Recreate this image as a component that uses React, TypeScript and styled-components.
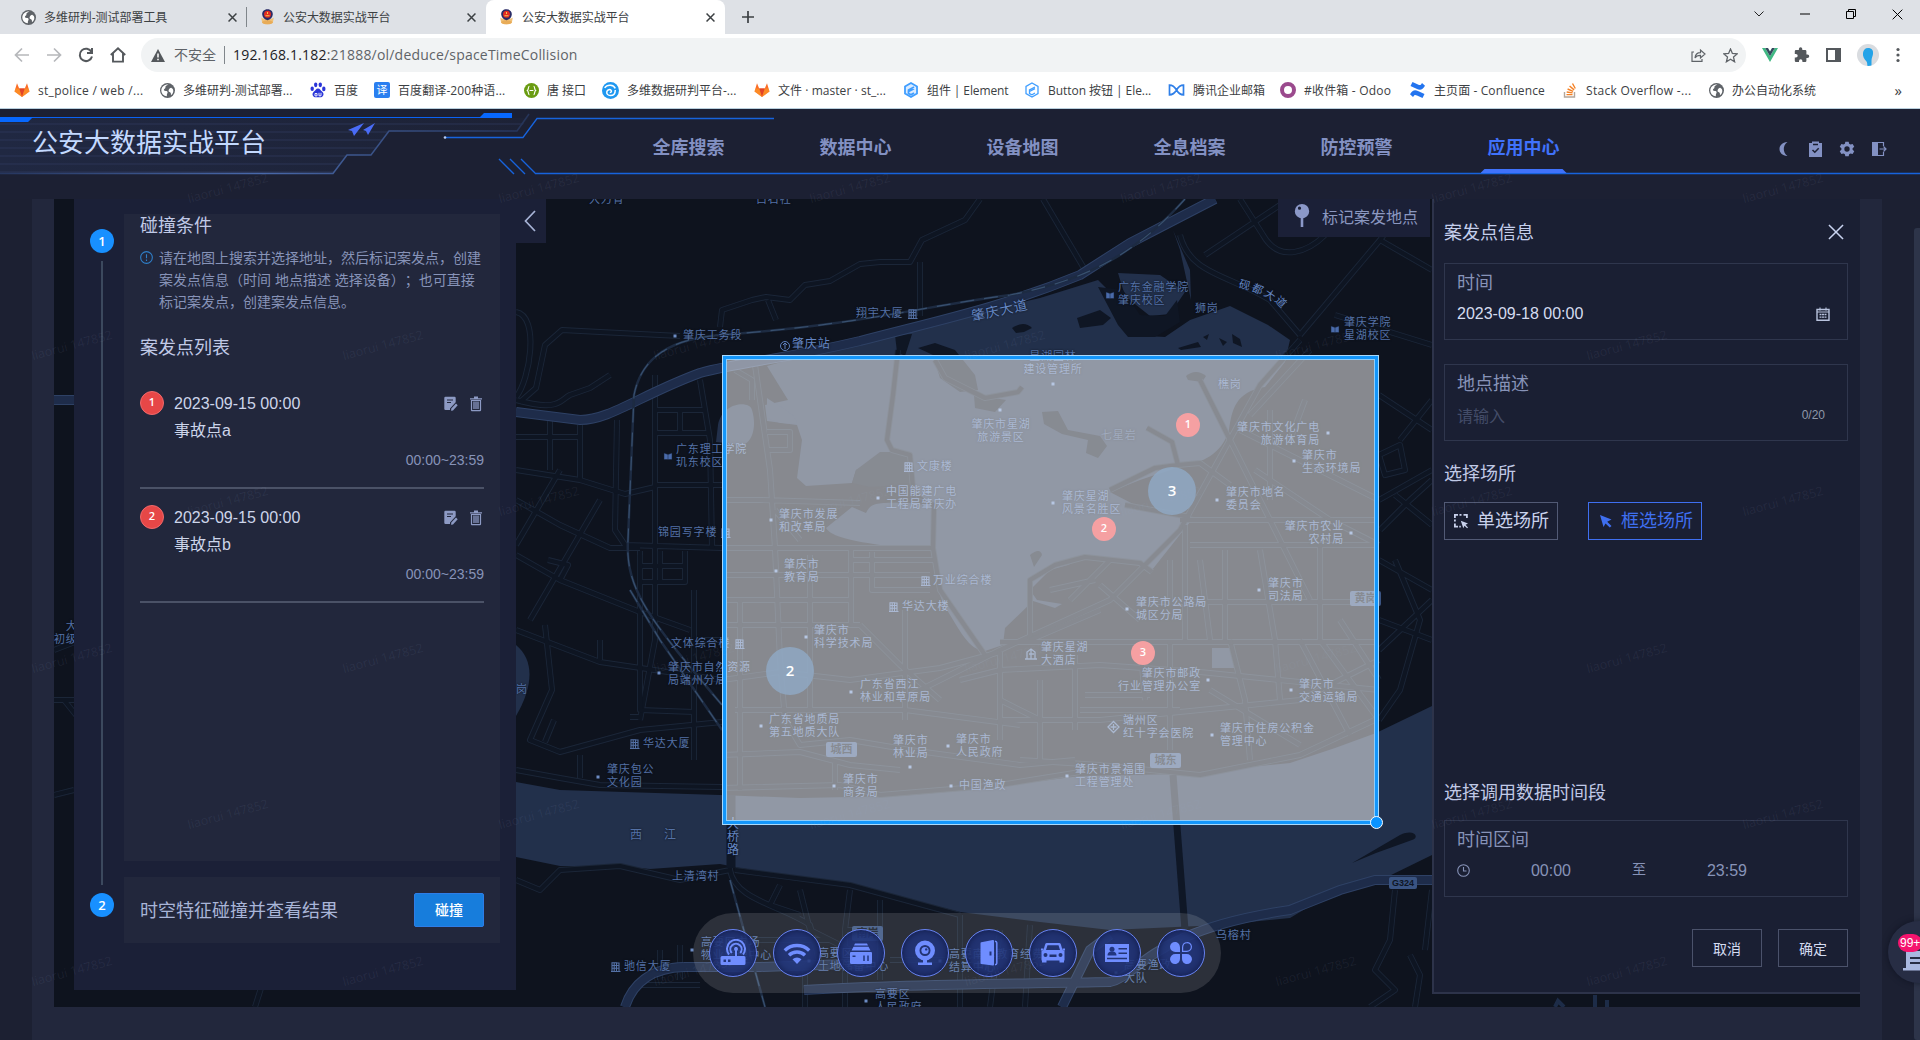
import React from "react";
import styled, { createGlobalStyle, css } from "styled-components";

const UI = `"Liberation Sans", "Noto Sans CJK SC", sans-serif`;
const SEGOE = `"Open Sans", "Noto Sans CJK SC", sans-serif`;

const Global = createGlobalStyle`
  *, *::before, *::after { box-sizing: border-box; }
  html, body { margin: 0; padding: 0; overflow: hidden; background: #1c2032; }
  body { font-family: ${UI}; text-spacing-trim: space-all; }
  svg { display: block; flex: none; }
  button { font: inherit; margin: 0; padding: 0; cursor: pointer; }
`;

const Window = styled.div`
  width: 1920px;
  height: 1040px;
  display: flex;
  flex-direction: column;
  overflow: hidden;
`;

/* ---------- browser chrome ---------- */

const TabStrip = styled.div`
  height: 34px;
  background: #dee1e6;
  display: flex;
  align-items: stretch;
  padding-left: 8px;
  font-size: 12px;
  font-family: ${SEGOE};
  color: #3c4043;
`;

const Tab = styled.div<{ $active?: boolean; $divider?: boolean }>`
  width: 239px;
  padding: 0 10px 0 13px;
  display: flex;
  align-items: center;
  gap: 8px;
  position: relative;
  letter-spacing: -0.05px;
  border-radius: 8px 8px 0 0;
  background: ${(p) => (p.$active ? "#fff" : "transparent")};
  ${(p) =>
    p.$divider &&
    css`
      &::after {
        content: "";
        position: absolute;
        right: 0;
        top: 7px;
        height: 20px;
        width: 1px;
        background: #80868b;
      }
    `}
`;

const TabTitle = styled.span`
  flex: 1;
  white-space: nowrap;
`;

const NewTab = styled.div`
  width: 46px;
  display: flex;
  align-items: center;
  justify-content: center;
`;

const WindowButtons = styled.div`
  margin-left: auto;
  display: flex;
  height: 28px;
  > div {
    width: 46px;
    display: flex;
    align-items: center;
    justify-content: center;
  }
`;

const Toolbar = styled.div`
  height: 40px;
  background: #fff;
  display: flex;
  align-items: center;
  padding-left: 14px;
  padding-top: 2px;
`;

const NavButtons = styled.div`
  display: flex;
  gap: 16px;
  width: 127px;
`;

const AddressBar = styled.div`
  width: 1605px;
  height: 34px;
  border-radius: 17px;
  background: #f1f3f4;
  display: flex;
  align-items: center;
  padding: 0 8px 0 10px;
  font-family: ${SEGOE};
  font-size: 14px;
  color: #5f6368;
`;

const Insecure = styled.span`
  margin-left: 9px;
  padding-right: 8px;
  line-height: 18px;
  border-right: 1px solid #80868b;
`;

const Url = styled.span`
  flex: 1;
  margin-left: 8px;
  padding-bottom: 1px;
  letter-spacing: 0.2px;
  b { font-weight: 400; color: #202124; }
`;

const BarIcons = styled.div<{ $gap: number; $ml?: number }>`
  display: flex;
  align-items: center;
  gap: ${(p) => p.$gap}px;
  margin-left: ${(p) => p.$ml ?? 0}px;
`;

const Avatar = styled.div`
  width: 22px;
  height: 22px;
  border-radius: 50%;
  background: #d9dce0;
  overflow: hidden;
`;

const Bookmarks = styled.div`
  height: 35px;
  background: #fff;
  border-bottom: 1px solid #b9cfdd;
  display: flex;
  align-items: center;
  padding: 0 18px 2px 14px;
  font-family: ${SEGOE};
  font-size: 12px;
  color: #3c4043;
`;

const Bookmark = styled.div<{ $w: number; $ls?: number }>`
  width: ${(p) => p.$w}px;
  display: flex;
  align-items: center;
  gap: 8px;
  white-space: nowrap;
  letter-spacing: ${(p) => p.$ls ?? 0}px;
`;

const More = styled.span`
  margin-left: auto;
  font-size: 15px;
`;

const Translate = styled.div`
  width: 16px;
  height: 16px;
  border-radius: 2px;
  background: #2a7ff0;
  color: #fff;
  font-size: 11px;
  line-height: 16px;
  text-align: center;
`;

const Ring = styled.div`
  width: 16px;
  height: 16px;
  border-radius: 50%;
  border: 4px solid #9b4a8d;
`;

/* ---------- platform header ---------- */

const Platform = styled.div`
  height: 931px;
  position: relative;
  display: flex;
  flex-direction: column;
  background: #1c2032;
`;

const Header = styled.header`
  height: 90px;
  position: relative;
  display: flex;
  align-items: flex-start;
  background: #1c2033;
`;

const HeaderArt = styled.svg`
  position: absolute;
  left: 0;
  top: 0;
`;

const Brand = styled.h1`
  margin: 15px 0 0 32px;
  width: 573px;
  font-size: 26px;
  line-height: 38px;
  font-weight: 400;
  color: #c3d9ff;
  position: relative;
`;

const Nav = styled.nav`
  display: flex;
  position: relative;
`;

const NavItem = styled.a<{ $on?: boolean }>`
  width: 167px;
  padding-top: 25px;
  line-height: 28px;
  text-align: center;
  font-size: 18px;
  font-weight: 700;
  color: ${(p) => (p.$on ? "#4072fb" : "#8391c3")};
  height: 65px;
  display: flex;
  flex-direction: column;
  align-items: center;
  gap: 7px;
  &::after {
    content: "";
    flex: none;
    width: 86px;
    height: 4px;
    clip-path: polygon(4px 0, 82px 0, 100% 100%, 0 100%);
    background: ${(p) => (p.$on ? "#4072fb" : "transparent")};
  }
`;

const HeaderTools = styled.div`
  margin: 32px 33px 0 auto;
  display: flex;
  gap: 16px;
  position: relative;
`;

/* ---------- page ---------- */

const Page = styled.main`
  height: 841px;
  margin: 0 38px 0 32px;
  padding: 0 22px;
  background: #22273c;
`;

const MapArea = styled.section`
  height: 808px;
  position: relative;
  overflow: hidden;
  background: #0e131e;
`;

const MapDrawing = styled.svg`
  position: absolute;
  left: 0;
  top: 0;
`;

const MapLabel = styled.div<{ $x: number; $y: number; $align?: string; $c?: string; $size?: number; $rot?: number }>`
  position: absolute;
  left: ${(p) => p.$x - 54}px;
  top: ${(p) => p.$y - 206}px;
  ${(p) => p.$align === "right" && "transform: translateX(-100%);"}
  ${(p) => p.$align === "center" && "transform: translateX(-50%);"}
  ${(p) => p.$rot !== undefined && `transform: rotate(${p.$rot}deg);`}
  text-align: ${(p) => p.$align ?? "left"};
  font-size: ${(p) => p.$size ?? 11}px;
  letter-spacing: 0.85px;
  line-height: 13px;
  color: ${(p) => p.$c ?? "#5471a6"};
  white-space: pre;
  text-shadow: 0 0 2px #0b101a;
`;

const DistrictTag = styled.div<{ $x: number; $y: number; $w: number }>`
  position: absolute;
  left: ${(p) => p.$x - 54}px;
  top: ${(p) => p.$y - 199}px;
  width: ${(p) => p.$w}px;
  height: ${(p) => (p.$w < 30 ? 12 : 15)}px;
  border-radius: 2px;
  background: #3a5482;
  color: #0e1625;
  font-size: ${(p) => (p.$w < 30 ? 9 : 11)}px;
  line-height: ${(p) => (p.$w < 30 ? 12 : 15)}px;
  font-weight: 700;
  text-align: center;
`;

const ClusterDot = styled.div<{ $x: number; $y: number; $big?: boolean }>`
  position: absolute;
  width: ${(p) => (p.$big ? 48 : 24)}px;
  height: ${(p) => (p.$big ? 48 : 24)}px;
  left: ${(p) => p.$x - 54 - (p.$big ? 24 : 12)}px;
  top: ${(p) => p.$y - 199 - (p.$big ? 24 : 12)}px;
  border-radius: 50%;
  background: ${(p) => (p.$big ? "rgba(143,168,194,0.86)" : "#f5a0a2")};
  color: #fff;
  font-family: ${SEGOE};
  font-size: ${(p) => (p.$big ? 15 : 11)}px;
  font-weight: 600;
  line-height: ${(p) => (p.$big ? 46 : 21)}px;
  text-align: center;
`;

const Selection = styled.div`
  position: absolute;
  left: 668px;
  top: 156px;
  width: 657px;
  height: 470px;
  border: 1px solid #a9d9fb;
  background: rgba(255, 255, 255, 0.5);
  background-clip: padding-box;
  box-shadow: inset 0 0 0 3px #1496fa, inset 0 0 0 4px #8fcdfa;
`;

const Handle = styled.div`
  position: absolute;
  right: -5px;
  bottom: -5px;
  width: 13px;
  height: 13px;
  border-radius: 50%;
  background: #0a93ff;
  border: 1px solid #fff;
`;

const Overlay = styled.div`
  position: relative;
  height: 100%;
  display: flex;
  align-items: flex-start;
  padding-left: 20px;
`;

const SidePanel = styled.aside`
  width: 442px;
  height: 791px;
  background: #1b2037;
  display: flex;
  padding: 15px 16px 0 16px;
`;

const Steps = styled.div`
  width: 24px;
  margin-right: 10px;
  padding-top: 15px;
  display: flex;
  flex-direction: column;
  align-items: center;
`;

const StepNo = styled.div`
  width: 24px;
  height: 24px;
  flex: none;
  border-radius: 50%;
  background: #1890ff;
  color: #fff;
  font-family: ${SEGOE};
  font-size: 13px;
  font-weight: 600;
  line-height: 24px;
  text-align: center;
`;

const StepLine = styled.div`
  width: 2px;
  height: 624px;
  margin: 8px 0;
  background: #3c495e;
`;

const Cards = styled.div`
  width: 376px;
  display: flex;
  flex-direction: column;
  gap: 16px;
`;

const Conditions = styled.div`
  height: 647px;
  padding: 0 16px;
  background: #22273c;
`;

const Heading = styled.h2<{ $mt?: number }>`
  margin: ${(p) => p.$mt ?? 0}px 0 0;
  font-size: 18px;
  line-height: 24px;
  font-weight: 400;
  color: #c0c9e6;
`;

const Tip = styled.div`
  display: flex;
  gap: 6px;
  margin-top: 9px;
  font-size: 14px;
  line-height: 22px;
  color: #8793b8;
  white-space: nowrap;
  svg { margin-top: 4px; }
`;

const IncidentList = styled.div`
  padding-top: 15px;
`;

const Incident = styled.div`
  height: 114px;
  border-bottom: 2px solid #4b5267;
  padding-top: 16px;
  display: grid;
  grid-template-columns: 34px 1fr auto;
  grid-template-rows: 27px 27px 30px;
  color: #cdd5ea;
  font-size: 16px;
  line-height: 26px;
`;

const IncidentNo = styled.div`
  width: 24px;
  height: 24px;
  border-radius: 50%;
  background: #e64747;
  border: 1px solid #f0696b;
  color: #fff;
  font-family: ${SEGOE};
  font-size: 11px;
  font-weight: 600;
  line-height: 20px;
  text-align: center;
`;

const IncidentName = styled.div`
  grid-column: 2 / 4;
`;

const IncidentHours = styled.div`
  grid-column: 1 / 4;
  text-align: right;
  font-size: 14px;
  line-height: 31px;
  color: #8793b8;
`;

const Actions = styled.div`
  display: flex;
  gap: 12px;
  padding: 5px 2px 0 0;
  color: #8d9ac4;
`;

const RunCard = styled.div`
  height: 66px;
  padding: 0 16px;
  background: #22273c;
  display: flex;
  align-items: center;
  justify-content: space-between;
  font-size: 18px;
  color: #a9b5d8;
  span { padding-bottom: 2px; }
`;

const RunButton = styled.button`
  width: 70px;
  height: 34px;
  border: 1px solid #2e7de6;
  border-radius: 2px;
  background: #177ddc;
  color: #fff;
  font-size: 14px;
  line-height: 30px;
  font-weight: 500;
`;

const Collapse = styled.div`
  width: 30px;
  height: 44px;
  background: #1b2037;
  display: flex;
  align-items: center;
  justify-content: center;
  padding: 0 3px 1px 0;
`;

const MarkButton = styled.div`
  width: 152px;
  height: 38px;
  margin: 0 2px 0 auto;
  background: #1b2037;
  color: #8b98c0;
  display: flex;
  align-items: center;
  gap: 12px;
  padding: 0 0 5px 16px;
  font-size: 16px;
`;

const InfoPanel = styled.aside`
  width: 428px;
  height: 795px;
  background: #1a1f33;
  border-left: 2px solid #2d334a;
  border-bottom: 2px solid #2d334a;
  padding: 0 12px 0 10px;
  display: flex;
  flex-direction: column;
`;

const PanelHead = styled.div`
  height: 64px;
  flex: none;
  display: flex;
  align-items: center;
  justify-content: space-between;
  padding: 0 4px 0 0;
  font-size: 18px;
  color: #c5cfec;
  svg { margin-top: 2px; }
`;

const Field = styled.div<{ $mt?: number }>`
  height: 77px;
  flex: none;
  margin-top: ${(p) => p.$mt ?? 0}px;
  border: 1px solid #2f364d;
  padding: 6px 12px 0;
  font-size: 16px;
  color: #d5dcef;
`;

const FieldName = styled.div`
  font-size: 18px;
  line-height: 27px;
  color: #8793b8;
`;

const FieldRow = styled.div<{ $pr?: number }>`
  height: 33px;
  display: flex;
  align-items: center;
  padding-right: ${(p) => p.$pr ?? 0}px;
`;

const Value = styled.span`
  flex: 1;
`;

const Placeholder = styled.span`
  flex: 1;
  color: #434c68;
`;

const Count = styled.span`
  font-size: 12px;
  color: #8f97a8;
`;

const TimeValue = styled.span`
  width: 162px;
  text-align: center;
  color: #8793b8;
`;

const Until = styled.span`
  width: 14px;
  font-size: 14px;
  color: #8793b8;
  padding-bottom: 6px;
`;

const Places = styled.div`
  display: flex;
  gap: 30px;
  margin-top: 16px;
`;

const PlaceButton = styled.button<{ $on?: boolean }>`
  width: 114px;
  height: 38px;
  background: transparent;
  border: 1px solid ${(p) => (p.$on ? "#3f6ff0" : "#525a75")};
  color: ${(p) => (p.$on ? "#3f6ff0" : "#c9d2ec")};
  display: flex;
  align-items: center;
  gap: 8px;
  padding: 0 8px;
  font-size: 18px;
  line-height: 34px;
  white-space: nowrap;
`;

const Footer = styled.div`
  display: flex;
  justify-content: flex-end;
  gap: 16px;
  margin-top: 32px;
`;

const PlainButton = styled.button`
  width: 70px;
  height: 38px;
  background: transparent;
  border: 1px solid #4b526b;
  color: #d5dcf2;
  font-size: 14px;
`;

const Dock = styled.div`
  position: absolute;
  left: 639px;
  top: 714px;
  width: 528px;
  height: 80px;
  border-radius: 40px;
  background: rgba(255, 255, 255, 0.125);
  display: flex;
  align-items: center;
  gap: 16px;
  padding-left: 16px;
`;

const DockButton = styled.div`
  width: 48px;
  height: 48px;
  border-radius: 50%;
  border: 1.5px solid #6681ee;
  background: rgba(33, 52, 124, 0.86);
  box-shadow: inset 0 0 7px rgba(14, 23, 66, 0.9);
  color: #6f8dff;
  display: flex;
  align-items: center;
  justify-content: center;
`;

const Scrollbar = styled.div`
  position: absolute;
  right: 0;
  top: 119px;
  bottom: 0;
  width: 6px;
  border-radius: 3px 0 0 3px;
  background: #2d3449;
`;

const FloatBall = styled.div`
  position: absolute;
  left: 1888px;
  top: 812px;
  width: 62px;
  height: 62px;
  border-radius: 50%;
  background: #272d44;
  box-shadow: 0 0 6px rgba(10, 14, 26, 0.6);
`;

const Badge = styled.span`
  position: absolute;
  left: 10px;
  top: 13px;
  height: 18px;
  padding: 0 2px;
  border-radius: 9px;
  background: #f5146e;
  color: #fff;
  font-size: 12px;
  line-height: 18px;
`;

const Watermark = styled.span<{ $x: number; $y: number }>`
  position: absolute;
  left: ${(p) => p.$x}px;
  top: ${(p) => p.$y}px;
  transform-origin: 0 100%;
  transform: rotate(-15deg);
  font-family: ${SEGOE};
  font-size: 12.5px;
  line-height: 16px;
  color: rgba(160, 172, 205, 0.09);
  pointer-events: none;
  white-space: nowrap;
`;

/* ---------- icons ---------- */

const Globe = () => (
  <svg width="15" height="15" viewBox="0 0 16 16">
    <circle cx="8" cy="8" r="8" fill="#5f6368" />
    <path d="M9 1.600c-1 1-3.400 1-3.200 3.200.2 1.200-2.200 1.400-1.600 3 .8 1.200 3 .2 3.800 1.600.6 1.400-1 1.800-.6 4.800-3.600-.2-6-3-6-6.400C1.600 4.400 4.400 1.400 9 1.600z" fill="#fff" />
    <path d="M12.200 5.200c1.200.4 2 1.600 2 3.200 0 1.800-1.200 3.800-2.400 4.400-.4-1 .2-2-.8-2.800-1-.6-2.200-.8-1.800-2.400.4-1.400 1.800-2.600 3-2.400z" fill="#fff" />
  </svg>
);

const Police = () => (
  <svg width="15" height="16" viewBox="0 0 15 16">
    <path d="M1.200 8.500C3 10.500 12 10.500 13.800 8.500L13 13c-1 3-10 3-11 0z" fill="#f0c078" />
    <ellipse cx="7.500" cy="13.300" rx="5.500" ry="2" fill="#e8ac58" />
    <path d="M7.500.3C11 .3 13 2.600 12.800 5.600c-.2 3-2.400 5.200-5.300 5.600C4.600 10.800 2.400 8.600 2.200 5.600 2 2.600 4 .3 7.500.3z" fill="#2b2c66" />
    <circle cx="7.500" cy="5.300" r="3.500" fill="#e32d22" />
    <path d="M5.500 6.300h4v1h-4zM7 3h1v2H7z" fill="#f7c64a" />
  </svg>
);

const Close = ({ s = 9, c = "#3c4043", w = 1.5 }: { s?: number; c?: string; w?: number }) => (
  <svg width={s} height={s} viewBox="0 0 10 10" stroke={c} strokeWidth={w * (10 / s)} fill="none">
    <path d="M.6.600 9.400 9.400M9.400.600.6 9.400" />
  </svg>
);

const Gitlab = () => (
  <svg width="16" height="16" viewBox="0 0 16 16">
    <path d="M8 15 .5 9.400 3 1.200 5.200 6.400h5.600L13 1.200l2.500 8.200z" fill="#fc6d26" />
    <path d="M8 15 5.200 6.400h5.600z" fill="#e24329" />
    <path d="M.5 9.400 1.500 6.400h3.700L8 15zM15.500 9.400l-1-3h-3.700L8 15z" fill="#fca326" opacity=".55" />
  </svg>
);

const Baidu = () => (
  <svg width="16" height="16" viewBox="0 0 16 16" fill="#2a35d8">
    <ellipse cx="5.700" cy="2.800" rx="1.700" ry="2.400" />
    <ellipse cx="10.300" cy="2.800" rx="1.700" ry="2.400" />
    <ellipse cx="2.200" cy="6.700" rx="1.700" ry="2.300" />
    <ellipse cx="13.800" cy="6.900" rx="1.700" ry="2.300" />
    <path d="M8 6.400c2 0 2.700 2 4 3.200 1.600 1.400 1.800 2.600 1.200 4-.8 2-3 1.800-5.200 1.600-2.200.2-4.400.4-5.200-1.600-.6-1.400-.2-2.800 1.200-4C5.300 8.400 6 6.400 8 6.400z" />
    <path d="M5 11.500h2v2.400H5zM9 10.800v3h2v-3" fill="none" stroke="#fff" strokeWidth=".9" />
  </svg>
);

const GreenApi = () => (
  <svg width="15" height="15" viewBox="0 0 16 16">
    <circle cx="8" cy="8" r="8" fill="#6a9c12" />
    <path d="M5.800 3.500c-1.600 0-.6 3.500-2.200 4.500 1.600 1 .6 4.500 2.200 4.500M10.200 3.500c1.600 0 .6 3.500 2.200 4.500-1.600 1-.6 4.500-2.200 4.500M6 8h4" stroke="#fff" strokeWidth="1.200" fill="none" />
  </svg>
);

const BlueSwirl = () => (
  <svg width="17" height="17" viewBox="0 0 16 16">
    <circle cx="8" cy="8" r="8" fill="#1f98f0" />
    <path d="M2.500 5.500C5 1.800 11 2.500 12.500 6M12.500 7.500c0 3.500-2 5.300-4.500 5.300S4 11 4.600 9s2.900-2.300 3.900-1.200 0 2.200-1.200 2.200" stroke="#fff" strokeWidth="1.400" fill="none" />
  </svg>
);

const ElementHex = ({ solid }: { solid?: boolean }) => (
  <svg width="16" height="16" viewBox="0 0 16 16" fill="none" stroke="#409eff" strokeWidth={solid ? 1.8 : 1.3}>
    <path d="M8 1 14 4.400v7.200L8 15l-6-3.400V4.400z" fill={solid ? "#dcecff" : "none"} />
    <path d="M11 5 5.500 8v3.500L8 12.800l3-1.800M5.500 9.500 11 6.600" />
  </svg>
);

const Tencent = () => (
  <svg width="17" height="12" viewBox="0 0 17 12" fill="none" stroke="#2f7fe8" strokeWidth="1.700">
    <path d="M1.500 1.200C5 1.200 7 3.500 8.500 6S12 10.800 15.500 10.800V1.200C12 1.200 10 3.500 8.500 6S5 10.800 1.500 10.800z" />
  </svg>
);

const Confluence = () => (
  <svg width="17" height="16" viewBox="0 0 17 16" fill="#2374ef">
    <path d="M1 12.200C3.500 7.800 6 7.500 9.500 9.200l6 2.800-2 4-5.500-2.600c-2-.9-2.600-.8-4 1.600z" />
    <path d="M16 3.800C13.500 8.200 11 8.500 7.500 6.800L1.500 4l2-4L9 2.600c2 .9 2.600.8 4-1.600z" />
  </svg>
);

const StackO = () => (
  <svg width="15" height="16" viewBox="0 0 15 16" fill="none" strokeWidth="1.400">
    <path d="M1.500 10v5h10v-5" stroke="#b3a69b" />
    <path d="M3.500 12.600h6M3.700 10l5.900.9M4.600 7l5.500 2.400M6.600 4l4.500 3.900M9.500 1.500l2.800 5" stroke="#f48024" />
  </svg>
);

const CalendarIcon = () => (
  <svg width="14" height="14" viewBox="0 0 14 14" fill="none" stroke="#b9c3de">
    <path d="M1 2.500h12v10.800H1z" strokeWidth="1.400" />
    <path d="M1 5h12M4 .5v3M10 .5v3" strokeWidth="1.100" />
    <path d="M3.500 7.500h2M6 7.500h2M8.500 7.500h2M3.500 10.200h2M6 10.200h2M8.500 10.200h2" strokeWidth="1.300" />
  </svg>
);

const ClockIcon = () => (
  <svg width="13" height="13" viewBox="0 0 13 13" fill="none" stroke="#8793b8" strokeWidth="1.100">
    <circle cx="6.500" cy="6.500" r="5.800" />
    <path d="M6.500 3v4h3" />
  </svg>
);

const BoxSelectIcon = () => (
  <svg width="16" height="16" viewBox="0 0 16 16" fill="currentColor">
    <path d="M1 1h4v1.800H2.800V5H1zM6.500 1h2v1.800h-2zM10.500 1h4.300v4H13V2.800h-2.500zM1 6.500h1.800v2H1zM1 10.500h1.800v2.300H5v1.800H1zM6.300 12.800h1.500v1.800H6.300z" />
    <path d="M7.800 7.800l7.200 2.700-2.500 1.300 2.500 2.600-.9.900-2.600-2.500-1.200 2.400z" />
  </svg>
);

const CursorIcon = () => (
  <svg width="16" height="16" viewBox="0 0 16 16" fill="currentColor">
    <path d="M3 2l11.500 4.500-4.300 2.200 4.300 4.200-1.700 1.700-4.300-4.200L6.500 14z" />
  </svg>
);

const Building = ({ x, y }: { x: number; y: number }) => (
  <g transform={`translate(${x - 4} ${y - 5})`} fill="none" stroke="#5471a6" strokeWidth="1.100">
    <path d="M1 9.500V.8h4.500v8.700M5.500 1H8v8.500M0 9.500h9.500M3.200 1v8M1 3.500H8M1 6.200h7" />
  </g>
);

const Book = ({ x, y }: { x: number; y: number }) => (
  <path d={`M${x - 4} ${y - 3}l4 1.500 4-1.500v6.500h-8zM${x} ${y - 1}v4`} fill="#4a6bab" stroke="#142036" strokeWidth=".5" />
);

/* ---------- map data ---------- */

type Lab = [number, number, string, ("left" | "right" | "center")?, string?, number?, number?];

const LABELS: Lab[] = [
  [589, 200, "大力青"], [756, 200, "白石社"], [683, 336, "肇庆工务段"], [792, 345, "肇庆站", "left", "#6587c4", 12],
  [856, 314, "翔宇大厦"], [676, 450, "广东理工学院\n玑东校区"], [658, 533, "锦园写字楼"], [779, 515, "肇庆市发展\n和改革局"],
  [784, 565, "肇庆市\n教育局"], [886, 492, "中国能建广电\n工程局肇庆办"], [917, 467, "文康楼"], [933, 581, "万业综合楼"],
  [902, 607, "华达大楼"], [971, 311, "肇庆大道", "left", "#6587c4", 13.500, -12], [1118, 288, "广东金融学院\n肇庆校区"],
  [1195, 309, "狮岗"], [1239, 286, "砚", "left", "#6587c4", 11, 15], [1252, 290, "都", "left", "#6587c4", 11, 25],
  [1264, 296, "大", "left", "#6587c4", 11, 35], [1275, 303, "道", "left", "#6587c4", 11, 45],
  [1344, 323, "肇庆学院\n星湖校区"], [1053, 357, "星湖园林\n建设管理所", "center"], [1218, 385, "樵岗"],
  [1001, 425, "肇庆市星湖\n旅游景区", "center"], [1101, 436, "七星岩", "left", "#41577f"], [1320, 428, "肇庆市文化广电\n旅游体育局", "right"],
  [1302, 456, "肇庆市\n生态环境局"], [1226, 493, "肇庆市地名\n委员会"], [1062, 497, "肇庆星湖\n风景名胜区"],
  [1344, 527, "肇庆市农业\n农村局", "right"], [1268, 584, "肇庆市\n司法局"], [1136, 603, "肇庆市公路局\n城区分局"],
  [1041, 648, "肇庆星湖\n大酒店"], [1201, 674, "肇庆市邮政\n行业管理办公室", "right"], [1299, 685, "肇庆市\n交通运输局"],
  [1123, 721, "端州区\n红十字会医院"], [1220, 729, "肇庆市住房公积金\n管理中心"], [1075, 770, "肇庆市景福围\n工程管理处"],
  [956, 740, "肇庆市\n人民政府"], [959, 786, "中国渔政"], [1216, 936, "乌榕村"], [1124, 966, "高要渔政\n大队"],
  [949, 955, "高要南岸教育经费\n结算中心"], [671, 644, "文体综合楼"], [668, 668, "肇庆市自然资源\n局端州分局"],
  [814, 631, "肇庆市\n科学技术局"], [860, 685, "广东省西江\n林业和草原局"], [769, 720, "广东省地质局\n第五地质大队"],
  [893, 741, "肇庆市\n林业局"], [843, 780, "肇庆市\n商务局"], [643, 744, "华达大厦"], [607, 770, "肇庆包公\n文化园"],
  [630, 836, "西", "left", "#5471a6", 12], [664, 836, "江", "left", "#5471a6", 12], [727, 825, "大\n桥\n路", "left", "#6587c4", 12],
  [672, 877, "上清湾村"], [516, 690, "岗"], [624, 967, "驰信大厦"], [701, 943, "高要区市场\n物业管理中心"],
  [818, 954, "高要区\n土地储备中心"], [875, 995, "高要区\n人民政府"], [54, 627, "   大\n初级"],
];

const DOTS: [number, number][] = [
  [675, 336], [771, 520], [776, 571], [878, 498], [1053, 384], [1000, 410], [1328, 433], [1294, 461], [1217, 500], [1053, 503],
  [1351, 533], [1259, 590], [1127, 609], [1208, 680], [1291, 690], [1212, 735], [1067, 776], [948, 746], [951, 786], [1116, 973],
  [659, 673], [806, 637], [851, 692], [761, 726], [910, 767], [834, 786], [598, 777], [692, 950], [809, 961], [866, 1001], [940, 961],
];

const BUILDINGS: [number, number][] = [[912, 314], [908, 467], [925, 581], [893, 607], [725, 533], [739, 644], [634, 744], [615, 967]];

const TAGS: [number, number, number, string][] = [
  [1350, 591, 31, "黄岗"], [1150, 753, 31, "城东"], [826, 742, 31, "城西"], [852, 926, 31, "南岸"], [1389, 877, 28, "G324"],
];

const WATER = [
  "M767 366L860 340 960 316 1040 298 1098 280 1118 300 1128 335 1165 337 1190 320 1230 306 1268 325 1290 340 1285 362 1265 387C1235 392 1232 410 1229 430C1222 455 1200 463 1185 465L1140 480 1110 492 1135 505 1165 514 1194 517 1152 570 1130 563 1084 557 1068 565 1050 570 1030 590 1037 600 1062 604 1055 608 1033 601 1005 628 1003 645 985 651C968 650 960 630 945 607C932 580 934 560 934 546L880 545C845 540 830 535 826 528L852 507 866 513C872 500 880 503 930 503L913 490 912 458 895 452 856 470 852 483 806 486 797 478 802 440 797 425 767 421 765 405 788 400z",
  "M767 398C785 410 797 415 797 424L780 423 767 418z",
  "M718 425C722 402 750 400 752 410C758 430 750 446 740 445L716 442z",
  "M516 645C534 660 534 685 516 716z",
  "M516 782L560 790 720 795 800 798 900 796 980 789 1080 776 1180 774 1290 763 1335 748 1376 733 1432 706V855L1385 878 1340 888 1290 918 1220 925 1110 930 1040 922 960 912 880 892 800 877 740 868 720 864 650 869 620 866 560 866 516 857z",
  "M1173 230L1190 270 1191 300 1180 250z",
  "M1212 648h22v20h-22z",
  "M1118 273L1160 275 1185 292 1170 314 1150 316 1125 296z",
];

const LAND = [
  "M918 348L935 343 955 350 975 375 978 390 960 392 940 378 933 355z",
  "M974 395L1006 400 995 412 975 408z",
  "M1042 412L1058 411 1068 430 1100 436 1107 446 1098 458 1086 453 1088 440 1062 434 1044 424z",
  "M1077 318L1100 310 1111 318 1103 325 1080 328z",
  "M1012 328q12-8 20 0l-8 4-8 1z",
  "M1178 348l20-6 3 5-20 3zM1203 337l6-3-2 6zM1219 338l8 4-4 4zM1232 334l8 5 2 8-9-4z",
  "M1098 287L1118 325 1128 337 1155 337 1180 322 1177 300 1165 316 1140 315 1123 290z",
  "M1186 376q10-8 20 0l-4 6-14-2z",
  "M856 470L880 452 895 452 912 460 912 485 870 487 852 483z",
  "M1030 555q10-8 12 0l-8 12z",
  "M1352 863L1400 835C1415 828 1420 838 1412 840L1376 853z",
  "M895 335L912 334 905 356 897 352z",
];

const MAIN_ROADS = [
  "M54 400H120M516 412L580 420C610 420 640 395 700 373C740 362 780 360 860 341C940 320 1000 308 1080 275L1130 243 1215 199",
  "M684 967H760L820 965 870 963",
  "M625 1007C632 985 650 968 684 967M804 990C900 984 1000 984 1110 982C1140 975 1150 930 1290 910L1340 890 1375 880 1432 880",
  "M1062 1007L1090 950 1110 935",
];

const ROADS = [
  "M516 312C540 316 530 380 516 397M520 402L536 388 545 345 562 330 600 332 680 336",
  "M720 327L722 310 752 300 766 297 790 300 805 285 830 281 860 264 880 262 910 262 922 240 965 220 980 199M768 300L776 320",
  "M516 400C560 412 560 400 570 395L590 388 610 375",
  "M920 262L920 316M1043 199L1085 270",
  "M1180 235C1190 275 1230 275 1270 300L1300 335",
  "M1300 335L1380 240 1432 170M1240 199L1263 235C1280 265 1310 250 1325 235M1205 255L1280 205",
  "M1380 240L1432 270M1335 315L1432 345M1300 340L1260 385 1180 530 1110 600 1000 650 900 700",
  "M655 375V530L655 640 640 720M550 420V470M580 425V480M617 420L615 530 625 545 722 548",
  "M700 380L710 440 712 548M655 410H705M680 410V433M655 433H710M655 485H722M516 437H580M516 470L580 480 625 494 655 487",
  "M516 500L560 525 610 548H640M516 555L560 580 640 612 690 630M548 560L568 565 560 580M516 630L600 662 722 680",
  "M530 620L600 500M516 545L560 470M640 551V582H685V551M660 551V582M640 566H685",
  "M722 640H700M640 555V710L694 712M545 625L552 690 530 740 560 752 640 730 722 722M694 590V760M630 717H640",
  "M516 770L560 778 600 785 722 787M600 640V660M554 720L545 742M580 755V778",
  "M755 365L770 470 775 548M735 370L752 380V400M767 432H790V450H767M722 500H760L860 503M775 510L800 540",
  "M722 548H830L934 548M722 575H930M775 548L780 660 785 720M810 555V710M851 548V625 M722 600H850M722 625H860M851 560H934",
  "M872 552V590H930M905 610V720M860 625L900 665 940 700M722 680L780 672 850 680 940 668 1000 652",
  "M740 600V790M735 710H905L1020 725M785 720L800 745 850 740 910 750 1020 765 1075 760",
  "M722 755L800 752 850 765 900 770M835 760V790M722 788L840 785 880 795 1000 785 1080 772",
  "M898 350L893 395 887 440 892 450 910 455 914 500 934 505 933 548 940 590 985 655",
  "M935 360L945 378 985 398 1018 392 1022 387M1147 428L1172 442 1178 465 1200 463 1230 485",
  "M1110 490L1155 468 1178 465M1125 505L1190 517M1030 640V580L1055 565 1085 557 1140 563 1152 572",
  "M1030 640L1100 610M1200 380L1310 600M1180 520H1379M1190 545H1379M1185 525V640M1225 550V640M1260 550L1275 640 1280 700",
  "M1250 415L1310 350M1240 430L1379 500M1270 410V500M1305 400L1290 440M1255 470L1330 520 1379 545",
  "M1000 642L1379 642M1150 602H1379M1170 560V605M1200 560L1210 640M1320 545V640L1379 720",
  "M960 680L1000 670 1100 665 1200 672 1379 690M1040 680V760M1000 652V740M1075 655V730M1170 642V750M1140 642L1145 700",
  "M1230 640L1245 700 1250 760M1000 720H1100L1200 710 1300 700 1379 660M1020 760L1100 765 1200 775 1300 755 1379 718",
  "M1080 710H1180M1085 695H1150M1210 690L1300 745M1300 640L1350 735M1340 620L1379 680",
  "M1050 590L1095 580M1070 600L1110 560M1100 585L1140 620M1000 700L1040 720",
  "M1379 395L1432 430M1379 500L1432 470M1400 440L1432 400M1379 560L1432 590M1379 620L1432 640M1395 560L1420 620 1400 690 1379 720M1379 650L1432 600",
  "M1379 455L1400 445 1405 470 1385 475zM1432 480L1410 500 1380 530M1395 495L1432 525",
  "M516 880L540 890 560 870 620 866 680 880 730 870M730 800V870C735 900 780 905 810 925L820 965",
  "M735 870L850 885 960 915M780 885L770 905 800 915M850 890L845 930 880 930M800 890L810 930 850 950M880 900V980M960 915V1007M1000 930L990 1007M1030 925L1025 1007",
  "M805 965V1007M845 930V1007M660 950V980M680 945V980M750 940H830M890 960H990M640 985H700",
  "M1395 890L1390 940 1375 970 1395 990 1370 1007M1410 955L1420 975 1415 1007M1432 890L1425 950",
  "M54 700H74M54 795L74 790M255 1007L262 985M64 700L80 720M54 650L80 640",
];

const RAIL = [
  "M1185 199C1140 250 1090 280 1010 295C930 305 860 325 720 335C660 340 640 365 634 395L628 540C625 590 650 620 722 705",
  "M630 590L660 640 722 730M730 880L765 1007",
];

function MapCanvas() {
  return (
    <MapDrawing width="1806" height="808" viewBox="54 199 1806 808" fill="none">
      {WATER.map((d) => <path key={d} d={d} fill="#22304b" />)}
      {LAND.map((d) => <path key={d} d={d} fill="#0f1624" />)}
      {ROADS.map((d) => <path key={d} d={d} stroke="#1b2638" strokeWidth="6" strokeLinejoin="round" />)}
      {ROADS.map((d) => <path key={d} d={d} stroke="#0e1522" strokeWidth="4.200" strokeLinejoin="round" />)}
      {MAIN_ROADS.map((d) => <path key={d} d={d} stroke="#2e4165" strokeWidth="10" />)}
      {MAIN_ROADS.map((d) => <path key={d} d={d} stroke="#1e2c4a" strokeWidth="8" />)}
      {RAIL.map((d) => <path key={d} d={d} stroke="#1d2b42" strokeWidth="2.500" />)}
      {RAIL.map((d) => <path key={d} d={d} stroke="#38506f" strokeWidth="1.200" strokeDasharray="14 10" />)}
      <path d="M1173 775L1185 930" stroke="#0f1726" strokeWidth="7" />
      <path d="M731 795V868" stroke="#0f1726" strokeWidth="9" />
      <path d="M1555 1007l3-6 6 6M1595 995v12M1607 1000v7" stroke="#1d2c48" strokeWidth="4" />
      {BUILDINGS.map(([x, y]) => <Building key={`${x}-${y}`} x={x} y={y} />)}
      <Book x={668} y={456} />
      <Book x={1110} y={295} />
      <Book x={1335} y={329} />
      <circle cx="785" cy="346" r="4.500" stroke="#5c7fbd" />
      <path d="M785 349v-5M783 345l2-2 2 2" stroke="#5c7fbd" />
      <path d="M1108 727l5.500-5.500 5.500 5.500-5.500 5.500zM1113.500 724v6M1110.500 727h6" stroke="#5470a0" strokeWidth="1.300" />
      <path d="M1027 659v-7l4-3 4 3v7M1025 659h12M1031 650v9M1029 654h5" stroke="#5470a0" strokeWidth="1.300" />
      {DOTS.map(([x, y]) => <rect key={`${x}-${y}`} x={x - 1.5} y={y - 1.5} width="3" height="3" fill="#6c8cc4" />)}
    </MapDrawing>
  );
}

const DOCK_ICONS = [
  <svg width="28" height="28" viewBox="0 0 28 28" fill="currentColor" key="router">
    <path d="M3 17h22a1.500 1.500 0 0 1 1.500 1.500v6A1.500 1.500 0 0 1 25 26H3a1.500 1.500 0 0 1-1.500-1.500v-6A1.500 1.500 0 0 1 3 17zM16 8h2v10h-2z" />
    <circle cx="17" cy="10" r="2" />
    <path d="M12.800 14a5.600 5.600 0 1 1 8.400 0M10 15.500a9 9 0 1 1 14 0" fill="none" stroke="currentColor" strokeWidth="2" />
    <path d="M4.500 20.500h2.500v2.500H4.500zM9 20.500h2.500v2.500H9z" fill="#22367f" />
  </svg>,
  <svg width="30" height="26" viewBox="0 0 30 26" fill="none" stroke="currentColor" strokeWidth="3.400" key="wifi">
    <path d="M2.800 10.500a17.500 17.500 0 0 1 24.400 0M7 15.300a11.500 11.500 0 0 1 16 0" />
    <path d="M10.500 19.200a7 7 0 0 1 9 0L15 24z" fill="currentColor" stroke="none" />
  </svg>,
  <svg width="22" height="24" viewBox="0 0 22 24" fill="currentColor" key="storage">
    <path d="M5 2.500h12l1 2H4zM3.500 5.800h15l2 3.700h-19zM1 11h20a1 1 0 0 1 1 1v9.500a1.500 1.500 0 0 1-1.500 1.500h-19A1.500 1.500 0 0 1 0 21.500V12a1 1 0 0 1 1-1z" />
    <path d="M14 14.500v5.500M18 14.500v5.500" stroke="#22367f" strokeWidth="1.500" />
    <path d="M2.500 14.500h3v1.500h-3z" fill="#22367f" />
  </svg>,
  <svg width="24" height="28" viewBox="0 0 24 28" fill="currentColor" key="camera">
    <path fillRule="evenodd" d="M12 1.500a10 10 0 1 1 0 20 10 10 0 0 1 0-20zm0 4.500a5.500 5.500 0 1 0 0 11 5.500 5.500 0 0 0 0-11z" />
    <circle cx="12" cy="11.500" r="3.600" />
    <circle cx="13.200" cy="10.400" r="1.200" fill="#22367f" />
    <path d="M10 21h4v2.500h5v2.500H5v-2.500h5z" />
  </svg>,
  <svg width="18" height="28" viewBox="0 0 18 28" fill="currentColor" key="door">
    <path d="M.5 4.200a1 1 0 0 1 .8-1L12.800 1a1 1 0 0 1 1.200 1v23.500a1 1 0 0 1-1.200 1L1.300 25a1 1 0 0 1-.8-1z" />
    <path d="M15 2.200c1 .2 1.800.6 1.800 1.500v20.500c0 .9-.8 1.300-1.800 1.500" fill="none" stroke="currentColor" strokeWidth="1.500" />
    <path d="M9.500 12.500h2v4h-2z" fill="#22367f" />
  </svg>,
  <svg width="28" height="24" viewBox="0 0 28 24" fill="currentColor" key="car">
    <path fillRule="evenodd" d="M8 2h12a2 2 0 0 1 1.900 1.400L23.500 9l2 1v9.500h-23V10l2-1 1.600-5.600A2 2 0 0 1 8 2zm.5 2.200L7 9h14l-1.500-4.800zM6.500 12a2 2 0 1 0 0 4 2 2 0 0 0 0-4zm15 0a2 2 0 1 0 0 4 2 2 0 0 0 0-4zM10.500 13.500V16h7v-2.500z" />
    <path d="M3 19h4.500v2.500H3zM20.500 19H25v2.500h-4.500zM2 7.500h2.500v2H2zM23.500 7.500H26v2h-2.500z" />
  </svg>,
  <svg width="26" height="22" viewBox="0 0 26 22" fill="currentColor" key="idcard">
    <path fillRule="evenodd" d="M1 2h24v18H1zM3 15.700v1.600h20v-1.600zM14.500 6v1.600H23V6zm0 4.500v1.600H23v-1.600z" />
    <circle cx="8" cy="7.300" r="2.500" fill="#22367f" />
    <path d="M3.500 13.500c0-3.500 2.500-4 4.500-4s4.500.5 4.500 4z" fill="#22367f" />
  </svg>,
  <svg width="26" height="26" viewBox="0 0 26 26" fill="currentColor" key="clover">
    <path d="M12 12H7.500A5.300 5.300 0 0 1 2 6.700 5 5 0 0 1 7 2c3.200 0 5 2.500 5 5.500zM12 14v4.500c0 3-1.800 5.500-5 5.500a5 5 0 0 1-5-4.700A5.300 5.300 0 0 1 7.500 14zM14 14h4.500a5.300 5.300 0 0 1 5.500 5.300 5 5 0 0 1-5 4.700c-3.200 0-5-2.500-5-5.500z" />
    <path d="M14.600 11.400V7.500c0-2.800 1.700-4.900 4.400-4.900a4.300 4.300 0 0 1 4.400 4.100 4.600 4.600 0 0 1-4.900 4.700z" fill="none" stroke="currentColor" strokeWidth="1.200" />
  </svg>,
];

const EditIcon = () => (
  <svg width="14" height="16" viewBox="0 0 14 16">
    <path d="M1.500.8h9a1.200 1.200 0 0 1 1.200 1.200v4.300L6 12.500V14H1.500A1.200 1.200 0 0 1 .3 12.800V2A1.200 1.200 0 0 1 1.500.800z" fill="currentColor" />
    <path d="M3 4h6M3 6.500h4" stroke="#22273c" />
    <path d="M7.300 12.600 12 7.500l1.700 1.700L9 14.400l-2 .4z" fill="currentColor" />
  </svg>
);

const TrashIcon = () => (
  <svg width="12" height="16" viewBox="0 0 12 16">
    <path d="M0 2.200h12v1.400H0zM4 .6h4v1.600H4z" fill="currentColor" />
    <path d="M1.500 4.500h9V14a.7.7 0 0 1-.7.700H2.200a.7.700 0 0 1-.7-.7z" fill="none" stroke="currentColor" strokeWidth="1.200" />
    <path d="M4 5.500V13M6 5.500V13M8 5.500V13" stroke="currentColor" strokeWidth="1.300" />
  </svg>
);

const BOOKMARKS: [number, React.ReactNode, string, number?][] = [
  [146, <Gitlab />, "st_police / web /...", 0.3],
  [150, <Globe />, "多维研判-测试部署..."],
  [64, <Baidu />, "百度"],
  [150, <Translate>译</Translate>, "百度翻译-200种语...", 0.1],
  [78, <GreenApi />, "唐 接口"],
  [152, <BlueSwirl />, "多维数据研判平台-..."],
  [149, <Gitlab />, "文件 · master · st_...", 0.05],
  [121, <ElementHex solid />, "组件 | Element", -0.1],
  [144, <ElementHex />, "Button 按钮 | Ele...", -0.05],
  [112, <Tencent />, "腾讯企业邮箱"],
  [129, <Ring />, "#收件箱 - Odoo", 0.2],
  [154, <Confluence />, "主页面 - Confluence", 0.1],
  [146, <StackO />, "Stack Overflow -...", 0.3],
  [120, <Globe />, "办公自动化系统"],
];

const INCIDENTS = [
  { no: 1, date: "2023-09-15 00:00", name: "事故点a", hours: "00:00~23:59" },
  { no: 2, date: "2023-09-15 00:00", name: "事故点b", hours: "00:00~23:59" },
];

const NAV = ["全库搜索", "数据中心", "设备地图", "全息档案", "防控预警", "应用中心"];

const MARKS: [number, number][] = [];
for (let row = 0; row < 6; row++) {
  for (let col = 0; col < 7; col++) {
    const x = (row % 2 ? 34 : 190) + col * 311;
    if (x < 1900) MARKS.push([x, 82 + row * 156.5]);
  }
}

export default function App() {
  return (
    <Window>
      <Global />
      <TabStrip>
        <Tab $divider>
          <Globe />
          <TabTitle>多维研判-测试部署工具</TabTitle>
          <Close />
        </Tab>
        <Tab>
          <Police />
          <TabTitle>公安大数据实战平台</TabTitle>
          <Close />
        </Tab>
        <Tab $active>
          <Police />
          <TabTitle>公安大数据实战平台</TabTitle>
          <Close />
        </Tab>
        <NewTab>
          <svg width="12" height="12" viewBox="0 0 12 12" stroke="#3c4043" strokeWidth="1.700"><path d="M6 0v12M0 6h12" /></svg>
        </NewTab>
        <WindowButtons>
          <div><svg width="10" height="6" viewBox="0 0 10 6" fill="none" stroke="#222"><path d="M.500.500 5 5 9.500.500" /></svg></div>
          <div><svg width="10" height="2"><path d="M0 1h10" stroke="#000" /></svg></div>
          <div><svg width="10" height="10" viewBox="0 0 10 10" fill="none" stroke="#000"><path d="M.5 2.500h7v7h-7zM2.500 2.500v-2h7v7h-2" /></svg></div>
          <div><Close s={11} c="#000" w={1} /></div>
        </WindowButtons>
      </TabStrip>
      <Toolbar>
        <NavButtons>
          <svg width="16" height="16" viewBox="0 0 16 16" fill="none" stroke="#b6b8bb" strokeWidth="1.700"><path d="M15 8H2M8 1.500 1.500 8 8 14.500" /></svg>
          <svg width="16" height="16" viewBox="0 0 16 16" fill="none" stroke="#b6b8bb" strokeWidth="1.700"><path d="M1 8h13M8 1.500 14.500 8 8 14.500" /></svg>
          <svg width="16" height="16" viewBox="0 0 16 16" fill="none" stroke="#54585c" strokeWidth="2"><path d="M13.500 5A6.200 6.200 0 1 0 14 9.500M14 1v5H9" /></svg>
          <svg width="16" height="16" viewBox="0 0 16 16" fill="none" stroke="#54585c" strokeWidth="1.900"><path d="M.8 8 8 1.300 15.200 8M3 6.500V14.600h10V6.500" /></svg>
        </NavButtons>
        <AddressBar>
          <svg width="14" height="13" viewBox="0 0 14 13"><path d="M7 0l7 13H0z" fill="#54585c" /><path d="M7 4.500v4M7 9.800v1.500" stroke="#fff" strokeWidth="1.500" /></svg>
          <Insecure>不安全</Insecure>
          <Url><b>192.168.1.182</b>:21888/ol/deduce/spaceTimeCollision</Url>
          <BarIcons $gap={17}>
            <svg width="15" height="14" viewBox="0 0 15 14" fill="none" stroke="#5f6368" strokeWidth="1.200"><path d="M3 4H1v9.400h10V11M4 10c.3-3.500 2.500-5.300 5.500-5.300V2l4.500 4-4.500 4V7.400C7 7.300 5.300 8 4 10z" /></svg>
            <svg width="15" height="15" viewBox="0 0 15 15" fill="none" stroke="#5f6368" strokeWidth="1.300"><path d="M7.500 1l1.900 4.500 4.800.4-3.700 3.200 1.100 4.700-4.100-2.500-4.100 2.500 1.100-4.700L.8 5.900l4.800-.4z" /></svg>
          </BarIcons>
        </AddressBar>
        <BarIcons $gap={16} $ml={16}>
          <svg width="16" height="14" viewBox="0 0 16 14"><path d="M0 0h3.200L8 8.300 12.800 0H16L8 14z" fill="#41b883" /><path d="M3.200 0H6l2 3.400L10 0h2.800L8 8.300z" fill="#34495e" /></svg>
          <svg width="16" height="16" viewBox="0 0 16 16" fill="#54585c"><path d="M13.500 7.500H12.400V4.200a1.200 1.200 0 0 0-1.200-1.200H8.300V1.900a1.700 1.700 0 0 0-3.400 0V3H2a1.200 1.200 0 0 0-1.200 1.200V7h1.100a1.800 1.800 0 0 1 0 3.600H.8v3.200A1.200 1.200 0 0 0 2 15h3v-1.100a1.700 1.700 0 0 1 3.400 0V15h2.800a1.200 1.200 0 0 0 1.200-1.200V11h1.100a1.700 1.700 0 0 0 0-3.500z" /></svg>
          <svg width="15" height="14" viewBox="0 0 15 14"><path d="M1 1h13v12H1z" fill="#fff" stroke="#54585c" strokeWidth="2" /><path d="M9 0h6v14H9z" fill="#54585c" /></svg>
          <Avatar><svg width="22" height="22" viewBox="0 0 22 22"><path d="M11 4c4 0 5.500 2.500 5 6-.3 2.500-1.500 4-1.500 7v5h-4c-.5-2 0-3-1-4.500C7 15 5.500 12 6 9c.4-3 2-5 5-5z" fill="#23a3e8" /></svg></Avatar>
          <svg width="6" height="16" viewBox="2 0 6 16" fill="#54585c"><circle cx="5" cy="2.500" r="1.600" /><circle cx="5" cy="8" r="1.600" /><circle cx="5" cy="13.500" r="1.600" /></svg>
        </BarIcons>
      </Toolbar>
      <Bookmarks>
        {BOOKMARKS.map(([w, icon, text, ls], i) => (
          <Bookmark key={i} $w={w} $ls={ls}>{icon}{text}</Bookmark>
        ))}
        <More>»</More>
      </Bookmarks>

      <Platform>
        <Header>
          <HeaderArt width="1920" height="90" viewBox="0 109 1920 90" fill="none">
            <defs>
              <linearGradient id="plate" x1="0" x2="1" y1="0" y2="0">
                <stop offset="0" stopColor="#202842" />
                <stop offset="1" stopColor="#1d2236" />
              </linearGradient>
              <linearGradient id="edge" gradientUnits="userSpaceOnUse" x1="0" x2="520" y1="0" y2="0">
                <stop offset="0" stopColor="#26365e" />
                <stop offset=".5" stopColor="#4969ab" />
                <stop offset="1" stopColor="#26355a" />
              </linearGradient>
              <pattern id="scan" width="4" height="8" patternUnits="userSpaceOnUse">
                <rect width="4" height="2" y="3" fill="#2c385a" opacity=".4" />
              </pattern>
            </defs>
            <path d="M0 118H528L518 131H389L371 155H347L333 173.500H0z" fill="url(#plate)" />
            <path d="M0 118H528L518 131H389L371 155H347L333 173.500H0z" fill="url(#scan)" />
            <path d="M0 173.500H333L347 155H371L389 131H517L529 114" stroke="url(#edge)" strokeWidth="1.500" />
            <path d="M0 117.500H512" stroke="#0b62f2" />
            <path d="M0 117H33L28 122H0zM484 113H512V118H479z" fill="#0768ff" />
            <path d="M348 130l16-7-10 13-2-5zM363 130l12-7-7 12-2-4z" fill="#4a6cf7" />
            <path d="M445 137.500H523L537 118.500H774M536 173.500H1920" stroke="#1763dd" strokeWidth="1.300" />
            <path d="M499 159l15 15M510 159l15 15M521 159l15 15" stroke="#1763dd" strokeWidth="1.400" />
            <circle cx="445" cy="137.500" r="1.300" fill="#b9cdf5" />
          </HeaderArt>
          <Brand>公安大数据实战平台</Brand>
          <Nav>
            {NAV.map((n, i) => <NavItem key={n} $on={i === 5}>{n}</NavItem>)}
          </Nav>
          <HeaderTools>
            <svg width="16" height="16" viewBox="0 0 16 16" fill="#8391c3"><path d="M11.500 1C6 1.500 3.500 4.500 3.500 8s2.500 6.500 8 7C8.800 13 7.800 10.500 7.800 8s1-5 3.700-7z" /></svg>
            <svg width="15" height="16" viewBox="0 0 15 16"><path d="M1 2h3V.5h7V2h3v14H1z" fill="#8391c3" /><path d="M5 3.500h5M4.500 9l2.300 2.300L10.700 7.200" stroke="#1c2033" strokeWidth="1.500" fill="none" /></svg>
            <svg width="16" height="16" viewBox="0 0 24 24" fill="#8391c3"><path fillRule="evenodd" d="M9.500 1h5l.7 3.200 2 1.200 3.200-1 2.500 4.300-2.500 2.200v2.200l2.500 2.200-2.500 4.300-3.200-1-2 1.200-.7 3.200h-5l-.7-3.200-2-1.200-3.200 1L1.100 15.300l2.500-2.200v-2.200L1.100 8.700l2.500-4.300 3.200 1 2-1.200zM12 8a4 4 0 1 0 0 8 4 4 0 0 0 0-8z" /></svg>
            <svg width="16" height="16" viewBox="0 0 16 16"><path d="M1 1h6v14H1z" fill="#8391c3" /><path d="M7 1.500h5.500V5M7 14.500h5.500V11M8.500 8h6.500M12.500 5.500 15 8l-2.500 2.500" stroke="#8391c3" strokeWidth="1.200" fill="none" /></svg>
          </HeaderTools>
        </Header>

        <Page>
          <MapArea>
            <MapCanvas />
            {LABELS.map(([x, y, text, align, c, size, rot]) => (
              <MapLabel key={`${x}-${y}`} $x={x} $y={y} $align={align} $c={c} $size={size} $rot={rot}>{text}</MapLabel>
            ))}
            {TAGS.map(([x, y, w, text]) => <DistrictTag key={text} $x={x} $y={y} $w={w}>{text}</DistrictTag>)}
            <Selection><Handle /></Selection>
            <ClusterDot $x={1188} $y={425}>1</ClusterDot>
            <ClusterDot $x={1104} $y={529}>2</ClusterDot>
            <ClusterDot $x={1143} $y={653}>3</ClusterDot>
            <ClusterDot $big $x={1172} $y={491}>3</ClusterDot>
            <ClusterDot $big $x={790} $y={671}>2</ClusterDot>
            <Dock>
              {DOCK_ICONS.map((icon, i) => <DockButton key={i}>{icon}</DockButton>)}
            </Dock>
            <Overlay>
              <SidePanel>
                <Steps>
                  <StepNo>1</StepNo>
                  <StepLine />
                  <StepNo>2</StepNo>
                </Steps>
                <Cards>
                  <Conditions>
                    <Heading>碰撞条件</Heading>
                    <Tip>
                      <svg width="13" height="13" viewBox="0 0 14 14" fill="none" stroke="#2f7fc9" strokeWidth="1.200"><circle cx="7" cy="7" r="6.300" /><path d="M7 3.500v4.300M7 9.200v1.500" /></svg>
                      <div>请在地图上搜索并选择地址，然后标记案发点，创建<br />案发点信息（时间 地点描述 选择设备）；也可直接<br />标记案发点，创建案发点信息。</div>
                    </Tip>
                    <Heading $mt={23}>案发点列表</Heading>
                    <IncidentList>
                      {INCIDENTS.map((it) => (
                        <Incident key={it.no}>
                          <IncidentNo>{it.no}</IncidentNo>
                          <div>{it.date}</div>
                          <Actions><EditIcon /><TrashIcon /></Actions>
                          <IncidentName>{it.name}</IncidentName>
                          <IncidentHours>{it.hours}</IncidentHours>
                        </Incident>
                      ))}
                    </IncidentList>
                  </Conditions>
                  <RunCard>
                    <span>时空特征碰撞并查看结果</span>
                    <RunButton>碰撞</RunButton>
                  </RunCard>
                </Cards>
              </SidePanel>
              <Collapse>
                <svg width="12" height="22" viewBox="0 0 12 22" fill="none" stroke="#a7b3d6" strokeWidth="1.700"><path d="M11 1 1.500 11 11 21" /></svg>
              </Collapse>
              <MarkButton>
                <svg width="16" height="25" viewBox="0 0 16 25" fill="#8b98c8"><path fillRule="evenodd" d="M8 1a7.200 7.200 0 1 1 0 14.400A7.200 7.200 0 0 1 8 1zM5.500 3.600a1.600 1.600 0 1 0 0 3.200 1.600 1.600 0 0 0 0-3.200z" /><path d="M6.700 14.500h2.600V24H6.700z" /></svg>
                标记案发地点
              </MarkButton>
              <InfoPanel>
                <PanelHead>案发点信息<Close s={16} c="#c9d3f0" w={1.5} /></PanelHead>
                <Field>
                  <FieldName>时间</FieldName>
                  <FieldRow $pr={5}>
                    <Value>2023-09-18 00:00</Value>
                    <CalendarIcon />
                  </FieldRow>
                </Field>
                <Field $mt={24}>
                  <FieldName>地点描述</FieldName>
                  <FieldRow $pr={10}>
                    <Placeholder>请输入</Placeholder>
                    <Count>0/20</Count>
                  </FieldRow>
                </Field>
                <Heading $mt={21}>选择场所</Heading>
                <Places>
                  <PlaceButton><BoxSelectIcon />单选场所</PlaceButton>
                  <PlaceButton $on><CursorIcon />框选场所</PlaceButton>
                </Places>
                <Heading $mt={241}>选择调用数据时间段</Heading>
                <Field $mt={15}>
                  <FieldName>时间区间</FieldName>
                  <FieldRow>
                    <ClockIcon />
                    <TimeValue>00:00</TimeValue>
                    <Until>至</Until>
                    <TimeValue>23:59</TimeValue>
                  </FieldRow>
                </Field>
                <Footer>
                  <PlainButton>取消</PlainButton>
                  <PlainButton>确定</PlainButton>
                </Footer>
              </InfoPanel>
            </Overlay>
          </MapArea>
        </Page>
        <Scrollbar />
        <FloatBall>
          <svg width="32" height="62" viewBox="0 0 32 62" fill="#a9b8e0"><path d="M18 30h14v18H18zM15 47h17v2.500H15z" /><path d="M22 37h10M22 42h10" stroke="#272d44" strokeWidth="2" /></svg>
          <Badge>99+</Badge>
        </FloatBall>
        {MARKS.map(([x, y]) => <Watermark key={`${x}-${y}`} $x={x} $y={y}>liaorui 147852</Watermark>)}
      </Platform>
    </Window>
  );
}
